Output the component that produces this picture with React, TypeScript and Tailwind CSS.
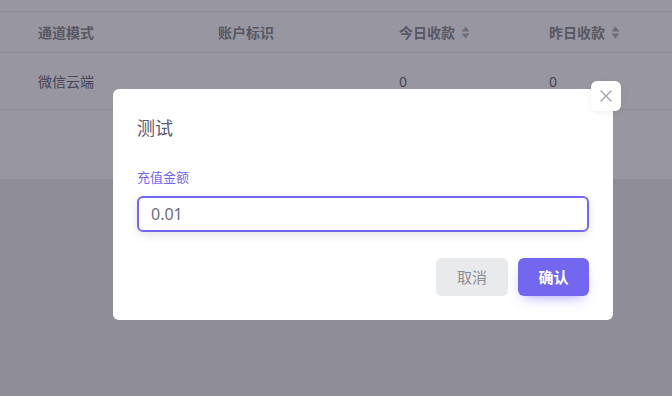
import React from "react";

function SortIcon() {
  return (
    <svg width="9" height="13" viewBox="0 0 9 13" className="ml-[6px]">
      <path d="M4.5 0.5 L8.5 5.5 L0.5 5.5 Z" fill="#b0b3bb" />
      <path d="M4.5 12.5 L8.5 7.5 L0.5 7.5 Z" fill="#b0b3bb" />
    </svg>
  );
}

export default function App() {
  const font = { fontFamily: '"Noto Sans", "Noto Sans CJK SC", sans-serif' };
  return (
    <div className="relative w-[672px] h-[396px] overflow-hidden bg-[#efeff1]" style={font}>
      {/* underlying table card */}
      <div className="bg-white h-[179px] pt-[11px]">
        <div className="border-t border-[#ebeef5]">
          <div className="flex h-[41px] items-center border-b border-[#ebeef5] text-[14px] font-bold text-[#8a8d93]">
            <div className="w-[218px] pl-[38px]">通道模式</div>
            <div className="w-[181px]">账户标识</div>
            <div className="w-[150px] flex items-center">今日收款<SortIcon /></div>
            <div className="flex items-center">昨日收款<SortIcon /></div>
          </div>
          <div className="flex h-[57px] items-center border-b border-[#ebeef5] text-[14px] text-[#6e6b7b]">
            <div className="w-[218px] pl-[38px]">微信云端</div>
            <div className="w-[181px]"></div>
            <div className="w-[150px]">0</div>
            <div>0</div>
          </div>
        </div>
      </div>

      {/* overlay */}
      <div className="absolute inset-0 bg-[rgba(26,22,44,0.45)]" />

      {/* modal */}
      <div className="absolute left-[113px] top-[89px] w-[500px] h-[231px] bg-white rounded-[6px] px-[24px] pt-[28px]">
        <div className="text-[18px] leading-[22px] text-[#5e5873]">测试</div>
        <div className="mt-[30px] text-[13px] leading-[16px] text-[#7367f0]">充值金额</div>
        <div className="mt-[11px] h-[36px] rounded-[6px] border-[2px] border-[#7367f0] shadow-[0_3px_10px_0_rgba(34,41,47,0.12)] flex items-center pl-[12px] text-[16px] text-[#6e6b7b]">
          0.01
        </div>
        <div className="mt-[26px] flex justify-end gap-[10px]">
          <button className="w-[72px] h-[38px] rounded-[6px] bg-[#e9eaec] text-[15px] text-[#8a8d93]">取消</button>
          <button className="w-[71px] h-[38px] rounded-[6px] bg-[#7367f0] text-[15px] font-bold text-white shadow-[0_6px_14px_-6px_rgba(115,103,240,0.7)]">确认</button>
        </div>
        <button className="absolute right-[-8px] top-[-8px] w-[30px] h-[30px] rounded-[6px] bg-white flex items-center justify-center shadow-[0_2px_6px_rgba(0,0,0,0.06)]">
          <svg width="14" height="14" viewBox="0 0 14 14">
            <path d="M2 2 L12 12 M12 2 L2 12" stroke="#a3a1ab" strokeWidth="1.4" strokeLinecap="round" />
          </svg>
        </button>
      </div>
    </div>
  );
}
